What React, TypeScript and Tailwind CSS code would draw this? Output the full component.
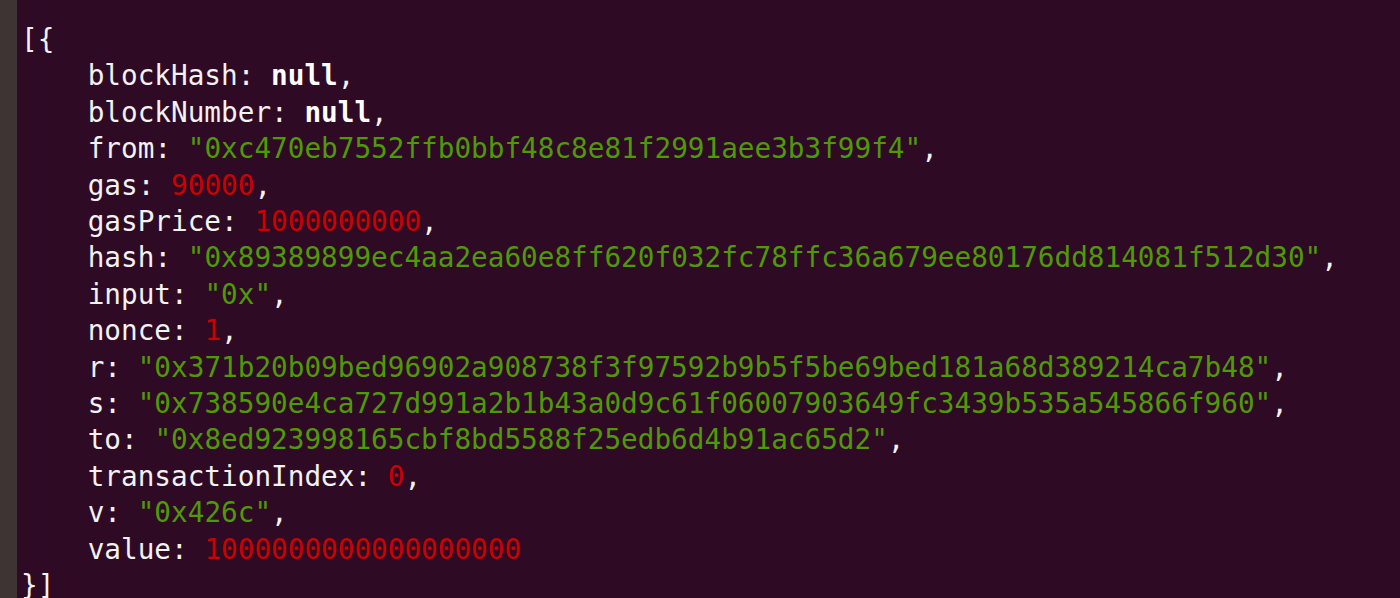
const W = ({ children }: { children: React.ReactNode }) => <span className="text-[#f2f2f0]">{children}</span>;
const G = ({ children }: { children: React.ReactNode }) => <span className="text-[#4e9a06]">{children}</span>;
const R = ({ children }: { children: React.ReactNode }) => <span className="text-[#cc0000]">{children}</span>;
const B = ({ children }: { children: React.ReactNode }) => <span className="font-bold text-white">{children}</span>;

const Field = ({ name, children, last }: { name: string; children: React.ReactNode; last?: boolean }) => (
  <div className="pl-[66.7px]">
    <W>{name}: </W>
    {children}
    {!last && <W>,</W>}
  </div>
);

const App = () => {
  return (
    <div className="flex w-[1400px] h-[598px] overflow-hidden bg-[#2e0a24]">
      <div className="w-[17px] shrink-0 bg-[#3e3434]" />
      <div
        className="pl-[4px] pt-[22px] text-[27.7px] leading-[36.4px] whitespace-pre text-[#f2f2f0]"
        style={{ fontFamily: '"DejaVu Sans Mono", "Liberation Mono", monospace' }}
      >
        <div><W>[&#123;</W></div>
        <Field name="blockHash"><B>null</B></Field>
        <Field name="blockNumber"><B>null</B></Field>
        <Field name="from"><G>"0xc470eb7552ffb0bbf48c8e81f2991aee3b3f99f4"</G></Field>
        <Field name="gas"><R>90000</R></Field>
        <Field name="gasPrice"><R>1000000000</R></Field>
        <Field name="hash"><G>"0x89389899ec4aa2ea60e8ff620f032fc78ffc36a679ee80176dd814081f512d30"</G></Field>
        <Field name="input"><G>"0x"</G></Field>
        <Field name="nonce"><R>1</R></Field>
        <Field name="r"><G>"0x371b20b09bed96902a908738f3f97592b9b5f5be69bed181a68d389214ca7b48"</G></Field>
        <Field name="s"><G>"0x738590e4ca727d991a2b1b43a0d9c61f06007903649fc3439b535a545866f960"</G></Field>
        <Field name="to"><G>"0x8ed923998165cbf8bd5588f25edb6d4b91ac65d2"</G></Field>
        <Field name="transactionIndex"><R>0</R></Field>
        <Field name="v"><G>"0x426c"</G></Field>
        <Field name="value" last><R>1000000000000000000</R></Field>
        <div><W>&#125;]</W></div>
      </div>
    </div>
  );
};

export default App;
